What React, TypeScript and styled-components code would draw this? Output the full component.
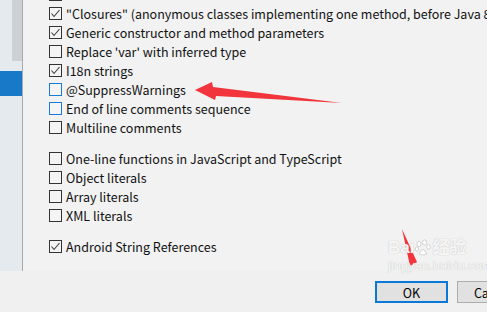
import styled, { createGlobalStyle } from "styled-components";

const GlobalStyle = createGlobalStyle`
  html, body {
    margin: 0;
    padding: 0;
    background: #f0f0f0;
  }
  body {
    font-family: "Noto Sans CJK SC", "Noto Sans", sans-serif;
  }
`;

interface Option {
  label: string;
  checked?: boolean;
  focused?: boolean;
  groupStart?: boolean;
}

const options: Option[] = [
  { label: "Lambdas", checked: true },
  { label: "\"Closures\" (anonymous classes implementing one method, before Java 8)", checked: true },
  { label: "Generic constructor and method parameters", checked: true },
  { label: "Replace 'var' with inferred type" },
  { label: "I18n strings", checked: true },
  { label: "@SuppressWarnings", focused: true },
  { label: "End of line comments sequence", focused: true },
  { label: "Multiline comments" },
  { label: "One-line functions in JavaScript and TypeScript", groupStart: true },
  { label: "Object literals" },
  { label: "Array literals" },
  { label: "XML literals" },
  { label: "Android String References", checked: true, groupStart: true },
];

export default function App() {
  return (
    <>
      <GlobalStyle />
      <Window>
        <Main>
          <Sidebar>
            <ScrollThumb />
            <SelectedItem />
          </Sidebar>
          <Content>
            <OptionList>
              {options.map((o) => (
                <Row key={o.label} $groupStart={o.groupStart}>
                  <Box $focused={o.focused}>
                    {o.checked && (
                      <svg width="11" height="11" viewBox="0 0 11 11">
                        <polyline
                          points="1.5,5.5 4,8.5 9.5,2"
                          fill="none"
                          stroke="#3c3c3c"
                          strokeWidth="1.1"
                        />
                      </svg>
                    )}
                  </Box>
                  <Label>{o.label}</Label>
                </Row>
              ))}
            </OptionList>
          </Content>
        </Main>
        <Footer>
          <Button $primary>OK</Button>
          <Button>Cancel</Button>
        </Footer>

        <Annotations width="487" height="312" viewBox="0 0 487 312">
          <polygon
            points="195,90 212,82 213,87 342,103 216,96 215,100"
            fill="#f2353c"
          />
          <polygon points="402,229 417,262 410,266" fill="#f2353c" />
        </Annotations>
        <Watermark>
          <WatermarkBrand>
            Bai
            <svg width="16" height="18" viewBox="0 0 16 18">
              <g fill="rgba(255,255,255,0.9)" stroke="rgba(170,170,170,0.6)" strokeWidth="0.8">
                <ellipse cx="4" cy="5" rx="2" ry="2.6" />
                <ellipse cx="9.5" cy="3.5" rx="2" ry="2.6" />
                <ellipse cx="13.5" cy="8" rx="1.8" ry="2.3" />
                <ellipse cx="2" cy="10" rx="1.6" ry="2.2" />
                <path d="M4 15 Q8 6 12 15 Q8 17 4 15 Z" />
              </g>
            </svg>
            经验
          </WatermarkBrand>
          <WatermarkUrl>jingyan.baidu.com</WatermarkUrl>
        </Watermark>
      </Window>
    </>
  );
}

const Window = styled.div`
  position: relative;
  width: 487px;
  height: 312px;
  overflow: hidden;
  display: flex;
  flex-direction: column;
  background: #f0f0f0;
`;

const Main = styled.div`
  display: flex;
  height: 271px;
`;

const Sidebar = styled.div`
  width: 22px;
  background: #e5eaef;
  border-right: 1px solid #a9a9a9;
  display: flex;
  flex-direction: column;
`;

const ScrollThumb = styled.div`
  margin-left: 12px;
  width: 10px;
  height: 61px;
  background: #cdd0d5;
`;

const SelectedItem = styled.div`
  margin-top: 10px;
  height: 25px;
  background: #1979c9;
`;

const Content = styled.div`
  flex: 1;
  background: #f2f2f2;
  padding-left: 26px;
  overflow: hidden;
`;

const OptionList = styled.div`
  margin-top: -15px;
  display: flex;
  flex-direction: column;
`;

const Row = styled.div<{ $groupStart?: boolean }>`
  display: flex;
  align-items: center;
  height: 19px;
  margin-top: ${(p) => (p.$groupStart ? "12px" : "0")};
  white-space: nowrap;
`;

const Box = styled.div<{ $focused?: boolean }>`
  box-sizing: border-box;
  width: 13px;
  height: 13px;
  border: 1px solid ${(p) => (p.$focused ? "#1a7bd6" : "#333333")};
  background: #f4f4f4;
  display: flex;
  align-items: center;
  justify-content: center;
  flex-shrink: 0;
  margin-right: 4px;
`;

const Label = styled.span`
  font-size: 12.5px;
  color: #111;
  line-height: 19px;
`;

const Footer = styled.div`
  flex: 1;
  display: flex;
  justify-content: flex-end;
  align-items: flex-start;
  gap: 9px;
  padding: 10px 0 0 0;
  margin-right: -43px;
`;

const Button = styled.div<{ $primary?: boolean }>`
  box-sizing: border-box;
  width: 73px;
  height: 22px;
  background: #e1e1e1;
  border: ${(p) => (p.$primary ? "2px solid #0a78d6" : "1px solid #adadad")};
  font-size: 12.5px;
  color: #000;
  display: flex;
  align-items: center;
  justify-content: center;
  font-family: "Noto Sans CJK SC", "Noto Sans", sans-serif;
`;

const Annotations = styled.svg`
  position: absolute;
  left: 0;
  top: 0;
  pointer-events: none;
`;

const Watermark = styled.div`
  position: absolute;
  left: 388px;
  top: 238px;
  display: flex;
  flex-direction: column;
  align-items: flex-start;
  pointer-events: none;
  color: rgba(255, 255, 255, 0.9);
  text-shadow: 0 0 1px rgba(150, 150, 150, 0.7);
`;

const WatermarkBrand = styled.div`
  font-family: "Liberation Sans", Arial, "Noto Sans CJK SC", sans-serif;
  font-weight: bold;
  font-size: 17px;
  line-height: 20px;
  display: flex;
  align-items: center;
  gap: 1px;
`;

const WatermarkUrl = styled.div`
  font-family: "Liberation Sans", Arial, sans-serif;
  font-size: 13px;
  line-height: 15px;
`;
